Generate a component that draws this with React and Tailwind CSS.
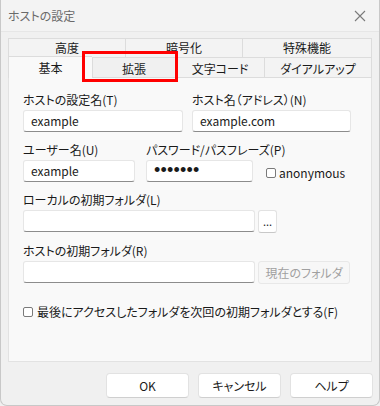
import React from "react";

const font = "[font-family:'Noto_Sans_CJK_JP',sans-serif] [font-feature-settings:'palt']";

function Input({ className = "", children }) {
  return (
    <div
      className={`h-[22px] bg-white rounded-[3px] border border-[#e6e6e6] border-b-[#8c8c8c] flex items-center pl-[7px] text-[12px] text-[#1a1a1a] ${className}`}
    >
      {children}
    </div>
  );
}

function Label({ children }) {
  return <div className="h-[16px] leading-[16px] text-[12px] text-[#1a1a1a] mb-[2px] whitespace-nowrap">{children}</div>;
}

function Check() {
  return <span className="inline-block w-[10px] h-[10px] bg-white border border-[#7a7a7a] rounded-[2px]" />;
}

export default function App() {
  return (
    <div className={`relative w-[380px] h-[406px] bg-[#f0f0f0] overflow-hidden ${font}`}>
      <div className="absolute inset-0 border-l border-r border-b border-[#c8c8c8] rounded-b-[7px] pointer-events-none" />
      {/* title bar */}
      <div className="h-[32px] flex items-center justify-between pl-[8px] pr-[10px] border-b border-[#e6e6e6] bg-[#f3f3f3]">
        <span className="text-[12px] text-[#6a6a6a]">ホストの設定</span>
        <svg width="12" height="12" viewBox="0 0 12 12" className="mr-[4px]">
          <path d="M1 1 L11 11 M11 1 L1 11" stroke="#7a7a7a" strokeWidth="1.1" />
        </svg>
      </div>

      {/* tabs */}
      <div className="mt-[6px] mx-[8px]">
        <div className="flex h-[19px] text-[12px] text-[#1a1a1a]">
          <div className="w-[117px] border-t border-l border-[#dcdcdc] bg-[#f3f3f3] flex items-center justify-center">高度</div>
          <div className="w-[117px] border-t border-l border-[#dcdcdc] bg-[#f3f3f3] flex items-center justify-center">暗号化</div>
          <div className="flex-1 border-t border-l border-r border-[#dcdcdc] bg-[#f3f3f3] flex items-center justify-center">特殊機能</div>
        </div>
        <div className="flex h-[21px] text-[12px] text-[#1a1a1a] items-end">
          <div className="w-[84px] h-[22px] -mt-[1px] border-t border-l border-[#dcdcdc] bg-[#f9f9f9] flex items-center justify-center relative z-10">基本</div>
          <div className="w-[83px] h-[21px] border-t border-l border-b border-[#dcdcdc] bg-[#f0f0f0] flex items-center justify-center pt-[2px]">拡張</div>
          <div className="w-[89px] h-[21px] border-t border-l border-b border-[#dcdcdc] bg-[#f3f3f3] flex items-center justify-center pt-[2px]">文字コード</div>
          <div className="flex-1 h-[21px] border-t border-l border-r border-b border-[#dcdcdc] bg-[#f3f3f3] flex items-center justify-center pt-[2px]">ダイアルアップ</div>
        </div>

        {/* panel */}
        <div className="h-[284px] bg-[#f9f9f9] border-l border-r border-b border-[#e2e2e2] pl-[14px] pt-[14px]">
          <div className="flex gap-[9px]">
            <div className="w-[160px]">
              <Label>ホストの設定名(T)</Label>
              <Input>example</Input>
            </div>
            <div className="w-[159px]">
              <Label>ホスト名（アドレス）(N)</Label>
              <Input>example.com</Input>
            </div>
          </div>

          <div className="flex gap-[11px] mt-[10px]">
            <div className="w-[112px]">
              <Label>ユーザー名(U)</Label>
              <Input>example</Input>
            </div>
            <div className="w-[107px]">
              <Label>パスワード/パスフレーズ(P)</Label>
              <Input>
                <span className="[font-family:'Liberation_Sans',sans-serif] text-[18px] leading-none tracking-[0.2px] -mt-[2px]">•••••••</span>
              </Input>
            </div>
            <div className="flex items-center gap-[3px] pt-[22px] pl-[2px] text-[12px] text-[#1a1a1a]">
              <Check />
              <span>anonymous</span>
            </div>
          </div>

          <div className="mt-[10px]">
            <Label>ローカルの初期フォルダ(L)</Label>
            <div className="flex gap-[3px]">
              <Input className="w-[232px]" />
              <div className="w-[19px] h-[23px] bg-white border border-[#e2e2e2] border-b-[#c8c8c8] rounded-[3px] flex items-center justify-center text-[11px] text-[#1a1a1a] leading-none pb-[1px]">...</div>
            </div>
          </div>

          <div className="mt-[10px]">
            <Label>ホストの初期フォルダ(R)</Label>
            <div className="flex gap-[3px]">
              <Input className="w-[232px]" />
              <div className="w-[92px] h-[23px] bg-[#f7f7f7] border border-[#e8e8e8] rounded-[3px] flex items-center justify-center text-[12px] text-[#a0a0a0]">現在のフォルダ</div>
            </div>
          </div>

          <div className="mt-[19px] flex items-center gap-[4px] text-[12px] text-[#1a1a1a]">
            <Check />
            <span>最後にアクセスしたフォルダを次回の初期フォルダとする(F)</span>
          </div>
        </div>

        {/* buttons */}
        <div className="flex justify-end gap-[9px] mt-[11px] -mr-[1px]">
          {["OK", "キャンセル", "ヘルプ"].map((t) => (
            <div
              key={t}
              className="w-[83px] h-[25px] bg-white border border-[#e2e2e2] border-b-[#cfcfcf] rounded-[4px] flex items-center justify-center text-[12px] text-[#1a1a1a]"
            >
              {t}
            </div>
          ))}
        </div>
      </div>

      {/* red highlight */}
      <div className="absolute left-[82px] top-[51px] w-[96px] h-[31px] border-[3px] border-[#ff0000] pointer-events-none z-20" />
    </div>
  );
}
